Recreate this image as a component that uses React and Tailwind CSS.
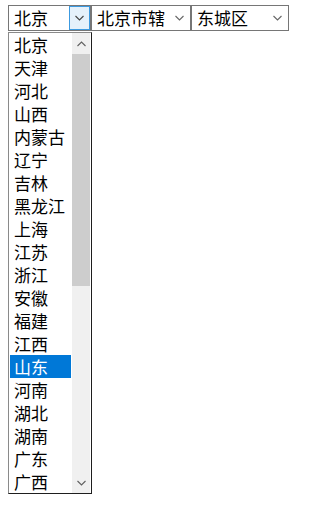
import { useState } from 'react';

const provinces = ['北京', '天津', '河北', '山西', '内蒙古', '辽宁', '吉林', '黑龙江', '上海', '江苏', '浙江', '安徽', '福建', '江西', '山东', '河南', '湖北', '湖南', '广东', '广西'];

const font = { fontFamily: '"Noto Sans CJK SC", "Liberation Sans", sans-serif' };

const Chevron = ({ up = false, className = '' }) => (
    <svg width="9" height="6" viewBox="0 0 9 6" className={className}>
        <path d={up ? 'M0.5 5 L4.5 1 L8.5 5' : 'M0.5 1 L4.5 5 L8.5 1'} fill="none" stroke="currentColor" strokeWidth="1.1" />
    </svg>
);

const FakeSelect = ({ value, width, open }) => (
    <div className={`${width} h-[26px] flex items-center bg-white border border-[#767676] text-[17px] text-black`}>
        <span className="flex-1 pl-[5px] leading-[22px] whitespace-nowrap">{value}</span>
        {open ? (
            <span className="w-[21px] h-full flex items-center justify-center bg-[#e5f1fb] border border-[#3c9ae0] text-[#444]">
                <Chevron />
            </span>
        ) : (
            <span className="w-[21px] h-full flex items-center justify-center text-[#666]">
                <Chevron />
            </span>
        )}
    </div>
);

const App = () => {
    const [hovered, setHovered] = useState('山东');

    return (
        <div className="relative w-[311px] h-[514px] bg-white" style={font}>
            {/* Selects */}
            <div className="flex pt-[5px] pl-[8px]">
                <FakeSelect value="北京" width="w-[83px]" open />
                <FakeSelect value="北京市辖" width="w-[100px]" />
                <FakeSelect value="东城区" width="w-[98px]" />
            </div>

            {/* Open dropdown list */}
            <div className="absolute left-[8px] top-[32px] w-[84px] h-[462px] flex bg-white border border-[#1e1e1e] border-l-[#8a8a8a] border-t-[#8a8a8a]">
                <ul className="flex-1 px-px overflow-hidden text-[17px]">
                    {provinces.map(p => (
                        <li
                            key={p}
                            onMouseEnter={() => setHovered(p)}
                            className={`h-[23px] leading-[23px] pl-[4px] ${hovered === p ? 'bg-[#0078d7] text-white' : 'text-black'}`}
                        >
                            {p}
                        </li>
                    ))}
                </ul>
                {/* Scrollbar */}
                <div className="w-[18px] mr-px flex flex-col bg-[#f0f0f0]">
                    <div className="h-[21px] flex items-center justify-center text-[#606060]">
                        <Chevron up />
                    </div>
                    <div className="h-[232px] bg-[#cdcdcd]" />
                    <div className="flex-1" />
                    <div className="h-[21px] flex items-center justify-center text-[#606060]">
                        <Chevron />
                    </div>
                </div>
            </div>
        </div>
    );
};

export default App;
